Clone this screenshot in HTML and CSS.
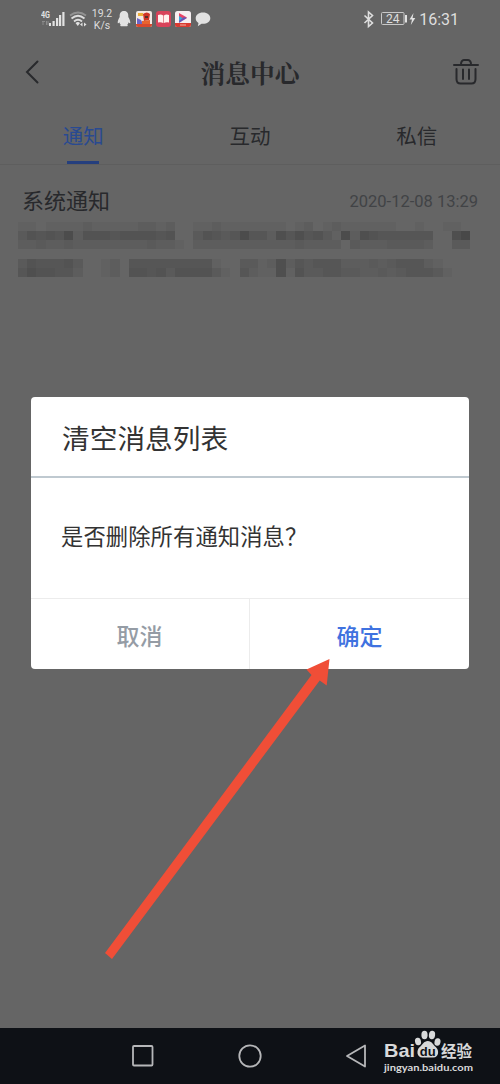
FILE: index.html
```html
<!DOCTYPE html>
<html lang="zh-CN">
<head>
  <meta charset="UTF-8">
  <title>消息中心</title>
  <link rel="stylesheet" href="styles.css">
</head>
<body>
  <div class="phone">
    <div class="statusbar">
      <svg class="signal" width="54" height="20" viewBox="0 0 54 20">
        <text class="net" x="0" y="9" textLength="9" lengthAdjust="spacingAndGlyphs">4G</text>
        <path class="dim" d="M2 12v4M1 12.500h3M5.500 12v4M7 12v4"/>
        <g class="fill">
          <rect x="8" y="14" width="2" height="3"/>
          <rect x="11.500" y="12" width="2.200" height="5"/>
          <rect x="15" y="9" width="2.200" height="8"/>
          <rect x="18" y="6" width="2.200" height="11"/>
          <rect x="21.300" y="3" width="2.200" height="14"/>
        </g>
        <path class="line faint" d="M29 6.500q8-6 16 0"/>
        <path class="line" d="M30.500 9.500q6.500-5.500 13 0M33 12.500q4-3.500 8 0"/>
        <path class="fill" d="M34.500 14q2.500-1.800 4.500 0l-2.200 3zM39 15.500l2.500-2v4zM45.500 15.500l-2.500-2v4z"/>
      </svg>
      <div class="speed">19.2<br>K/s</div>
      <svg class="apps" width="94" height="20" viewBox="0 0 94 20">
        <path class="fill" d="M7 2c-3.500 0-4.500 2.500-4.300 6C1.500 10 .6 12 .7 14c.6.600 1.200-.300 1.700-.800.200 1.200.700 2 1.300 2.500-1.500 1.300.500 2 3.300 1.500 2.800.500 4.800-.200 3.300-1.500.600-.500 1.100-1.300 1.300-2.500.500.500 1.100 1.400 1.700.800.100-2-.800-4-2-6C11.500 4.500 10.500 2 7 2z"/>
        <rect x="19" y="2" width="16" height="16" rx="2" fill="#f3e9e4"/>
        <path d="M21 4h5v3h-5z" fill="#ecae38"/>
        <path d="M26 5q4-3 7 0l-1 6-5 1z" fill="#cf3425"/>
        <path d="M20 9l4 2 2 4h-6z" fill="#6b65c8"/>
        <path d="M25 12l8-1v4h-8z" fill="#e8642f"/>
        <path d="M28 7h3v2h-3z" fill="#55302a"/>
        <path d="M19 15h16v1q0 2-2 2H21q-2 0-2-2z" fill="#d8492d"/>
        <rect x="39" y="2" width="15" height="16" rx="3" fill="#d8435a"/>
        <path d="M41 6q3-1 5.200.500V14q-2.200-1-5.200-.5zM52 6q-3-1-5.200.500V14q2.200-1 5.200-.5z" fill="#fff1ee"/>
        <rect x="58" y="2" width="16" height="16" rx="2.500" fill="#f6eff1"/>
        <path d="M62 4l8 4.500-3 2-5-2z" fill="#e94366"/>
        <path d="M62 7l5 3-5 3z" fill="#3aa7dc"/>
        <path d="M67 8l3 1-8 5v-2z" fill="#6956b6"/>
        <path d="M58 14h16v2q0 2-2 2H60q-2 0-2-2z" fill="#d93b31"/>
        <path d="M63 16h6" stroke="#f3b3a5" stroke-width="1"/>
        <path class="fill" d="M86 3.500c-4.500 0-7.300 2.500-7.300 5.700 0 2 1 3.600 2.800 4.700l-.7 3.300 3.700-2.400c5 .500 8.800-2 8.800-5.600C93.300 6 90.500 3.500 86 3.500z"/>
      </svg>
      <div class="spacer"></div>
      <svg class="power" width="54" height="20" viewBox="0 0 54 20">
        <path class="line thin" d="M1.500 5.500l8 7.500-4 3.500V2L9.500 5.500l-8 7.500"/>
        <rect class="box" x="18.500" y="2.500" width="22.500" height="12" rx="1"/>
        <text class="level" x="29.700" y="12.800">24</text>
        <path class="fill" d="M42 5h2v7.500h-2zM50.500 3L46.500 9.500h2.500l-1.200 5.500 4.500-7H49.600z"/>
      </svg>
      <div class="clock">16:31</div>
    </div>

    <div class="header">
      <svg width="28" height="30" viewBox="0 0 28 30">
        <path class="ink" d="M17.500 4.500L7 15 17.500 25.500"/>
      </svg>
      <h1>消息中心</h1>
      <svg width="28" height="30" viewBox="0 0 28 30">
        <path class="ink" d="M2 8h24M9 7.500q0-4 3-4.500h4q3 .500 3 4.500M4.500 12v10q0 4.500 4 4.500h11q4 0 4-4.500V12M11 12.500v9.500M17 12.500v9.500"/>
      </svg>
    </div>

    <div class="tabs">
      <div class="tab active">通知</div>
      <div class="tab">互动</div>
      <div class="tab">私信</div>
    </div>

    <div class="notice">
      <div class="notice-head">
        <span class="name">系统通知</span>
        <span class="date">2020-12-08 13:29</span>
      </div>
      <svg class="mosaic" id="mosaic" width="462" height="64" viewBox="0 0 462 64" shape-rendering="crispEdges"></svg>
    </div>

    <div class="navbar">
      <svg width="24" height="24" viewBox="0 0 24 24"><rect x="2" y="2" width="19.500" height="19.500" rx="1"/></svg>
      <svg width="24" height="24" viewBox="0 0 24 24"><circle cx="12" cy="12" r="10.700"/></svg>
      <svg width="24" height="24" viewBox="0 0 24 24"><path d="M21 1.500v21L3 12z"/></svg>
    </div>

    <div class="dialog">
      <div class="dialog-title">清空消息列表</div>
      <div class="dialog-body">是否删除所有通知消息？</div>
      <div class="dialog-buttons">
        <div class="btn cancel">取消</div>
        <div class="btn ok">确定</div>
      </div>
    </div>

    <svg class="arrow" width="230" height="306" viewBox="0 0 230 306">
      <path d="M5 294L211.500 16l-5-5.500L229.500 0l-2.800 26.500-7-5L12 300z"/>
    </svg>

    <svg class="logo" width="96" height="48" viewBox="0 0 96 48">
      <text class="brand" x="3" y="28.300" textLength="31" lengthAdjust="spacingAndGlyphs">Bai</text>
      <g>
        <ellipse cx="37" cy="12.500" rx="3" ry="3.800" transform="rotate(-12 37 12.500)"/>
        <ellipse cx="43.500" cy="6" rx="3.100" ry="4.200"/>
        <ellipse cx="51" cy="6" rx="3.100" ry="4.200" transform="rotate(8 51 6)"/>
        <ellipse cx="56.500" cy="13" rx="3" ry="3.800" transform="rotate(12 56.500 13)"/>
        <path d="M46.800 12c-4 0-5.500 4-8 6-3.800 3.200-3 10.500 2.500 10.500h11c5.500 0 6.300-7 2.500-10.500-2.500-2-4-6-8-6z"/>
      </g>
      <text class="du" x="46.800" y="26.500">du</text>
      <text class="jy" x="60" y="27.500" textLength="31" lengthAdjust="spacingAndGlyphs">经验</text>
      <text class="url" x="3" y="41.500" textLength="89" lengthAdjust="spacingAndGlyphs">jingyan.baidu.com</text>
    </svg>
  </div>

  <script src="mosaic.js"></script>
</body>
</html>
```
FILE: styles.css
```css
body {
  margin: 0;
  font-family: Roboto, "Noto Sans CJK SC", sans-serif;
}

.phone {
  position: relative;
  display: flex;
  flex-direction: column;
  width: 500px;
  height: 1084px;
  overflow: hidden;
  background: #656565;
  color: #28292c;
}

.statusbar {
  display: flex;
  align-items: center;
  height: 38px;
  padding: 0 41px;
  color: #dedede;
}

.statusbar .fill {
  fill: #e2e2e2;
}

.statusbar .line {
  fill: none;
  stroke: #dedede;
  stroke-width: 1.8;
}

.statusbar .thin {
  stroke-width: 1.6;
}

.statusbar .faint {
  stroke: #929292;
}

.dim {
  fill: none;
  stroke: #8c8c8c;
}

.net {
  font-size: 9px;
  font-weight: 700;
  fill: #e2e2e2;
}

.speed {
  width: 24px;
  margin: 2px 0 0 -5px;
  font-size: 10.5px;
  line-height: 12px;
  text-align: center;
}

.apps {
  margin-left: 3px;
}

.spacer {
  flex: 1;
}

.box {
  fill: none;
  stroke: #c8c8c8;
}

.level {
  font-size: 12px;
  fill: #dedede;
  text-anchor: middle;
}

.power {
  margin-top: 1px;
}

.clock {
  margin: 1px 0 0 2px;
  font-size: 16px;
  line-height: 20px;
}

.header {
  display: flex;
  align-items: center;
  justify-content: space-between;
  height: 68px;
  padding: 0 20px;
}

.header h1 {
  margin: 2px 0 0;
  font-family: "Noto Serif CJK SC", "Noto Sans CJK SC", serif;
  font-size: 24.7px;
  font-weight: 700;
  line-height: 36px;
}

.ink {
  fill: none;
  stroke: #28292c;
  stroke-width: 2;
  stroke-linecap: round;
}

.tabs {
  display: flex;
  height: 58px;
  border-bottom: 1px solid #5e5e5e;
}

.tab {
  display: flex;
  flex: 1;
  flex-direction: column;
  align-items: center;
  justify-content: space-between;
  padding-top: 16px;
  font-size: 20.5px;
  line-height: 30px;
}

.active {
  color: #294a91;
}

.active::after {
  content: "";
  width: 32px;
  height: 3px;
  background: #253f7e;
}

.notice {
  flex: 1;
  padding: 20px 22px 0;
}

.notice-head {
  display: flex;
  align-items: center;
  justify-content: space-between;
  height: 32px;
}

.name {
  margin-top: -4px;
  font-size: 22px;
}

.date {
  font-size: 16.5px;
  color: #414346;
}

.mosaic {
  display: block;
  margin: 5px 0 0 -4px;
}

.navbar {
  display: flex;
  align-items: center;
  justify-content: space-between;
  height: 56px;
  padding: 0 132px 0 131px;
  background: #0e1116;
}

.navbar svg {
  fill: none;
  stroke: #b6b7b9;
  stroke-width: 1.8;
  stroke-linejoin: round;
}

.dialog {
  position: absolute;
  top: 397px;
  left: 31px;
  width: 438px;
  height: 272px;
  overflow: hidden;
  border-radius: 4px;
  background: #fff;
  color: #333;
}

.dialog-title {
  height: 79px;
  padding-left: 31px;
  border-bottom: 2px solid #bfc9d0;
  font-size: 27.7px;
  line-height: 85px;
}

.dialog-body {
  height: 120px;
  padding-left: 30px;
  border-bottom: 1px solid #ececec;
  font-size: 22.3px;
  letter-spacing: 0.1px;
  line-height: 118px;
}

.dialog-buttons {
  display: flex;
  height: 70px;
}

.btn {
  flex: 1;
  font-size: 23px;
  font-weight: 500;
  line-height: 78px;
  text-align: center;
}

.cancel {
  margin-left: -1px;
  border-right: 1px solid #ececec;
  color: #959ca5;
}

.ok {
  color: #3f72e0;
}

.arrow {
  position: absolute;
  top: 659px;
  left: 100px;
  fill: #f04e37;
}

.logo {
  position: absolute;
  top: 1029px;
  left: 381px;
  fill: #d8d9da;
}

.brand {
  font-family: "Liberation Sans", sans-serif;
  font-size: 19px;
  font-weight: 700;
}

.du {
  font-family: "Liberation Sans", sans-serif;
  font-size: 13px;
  font-weight: 700;
  fill: #0e1116;
  text-anchor: middle;
}

.jy {
  font-family: "Noto Sans CJK SC", sans-serif;
  font-size: 15.5px;
  font-weight: 700;
}

.url {
  font-family: Lato, sans-serif;
  font-size: 10.3px;
  font-weight: 700;
}
```
FILE: mosaic.js
```js
// darkness of each block, one string per row
const rows = [
  { y: 0, cells: '1101111211111221200112111111101201211111100100110' },
  { y: 9, cells: '3545472555455554500354347442646453172654444440068' },
  { y: 18, cells: '2232232222222232210222222222223222203222333320033' },
  { y: 37, cells: '354445300120444444444100331262434442223234442100' },
  { y: 46, cells: '465544200120554535555310421161533443322323444310' }
];

const size = 9.23;
const mosaic = document.getElementById('mosaic');

rows.forEach(row => {
  [...row.cells].forEach((cell, i) => {
    const rect = document.createElementNS('http://www.w3.org/2000/svg', 'rect');
    rect.setAttribute('x', i * size);
    rect.setAttribute('y', row.y);
    rect.setAttribute('width', size);
    rect.setAttribute('height', 9);
    rect.setAttribute('fill-opacity', cell * 0.035);
    mosaic.appendChild(rect);
  });
});
```
